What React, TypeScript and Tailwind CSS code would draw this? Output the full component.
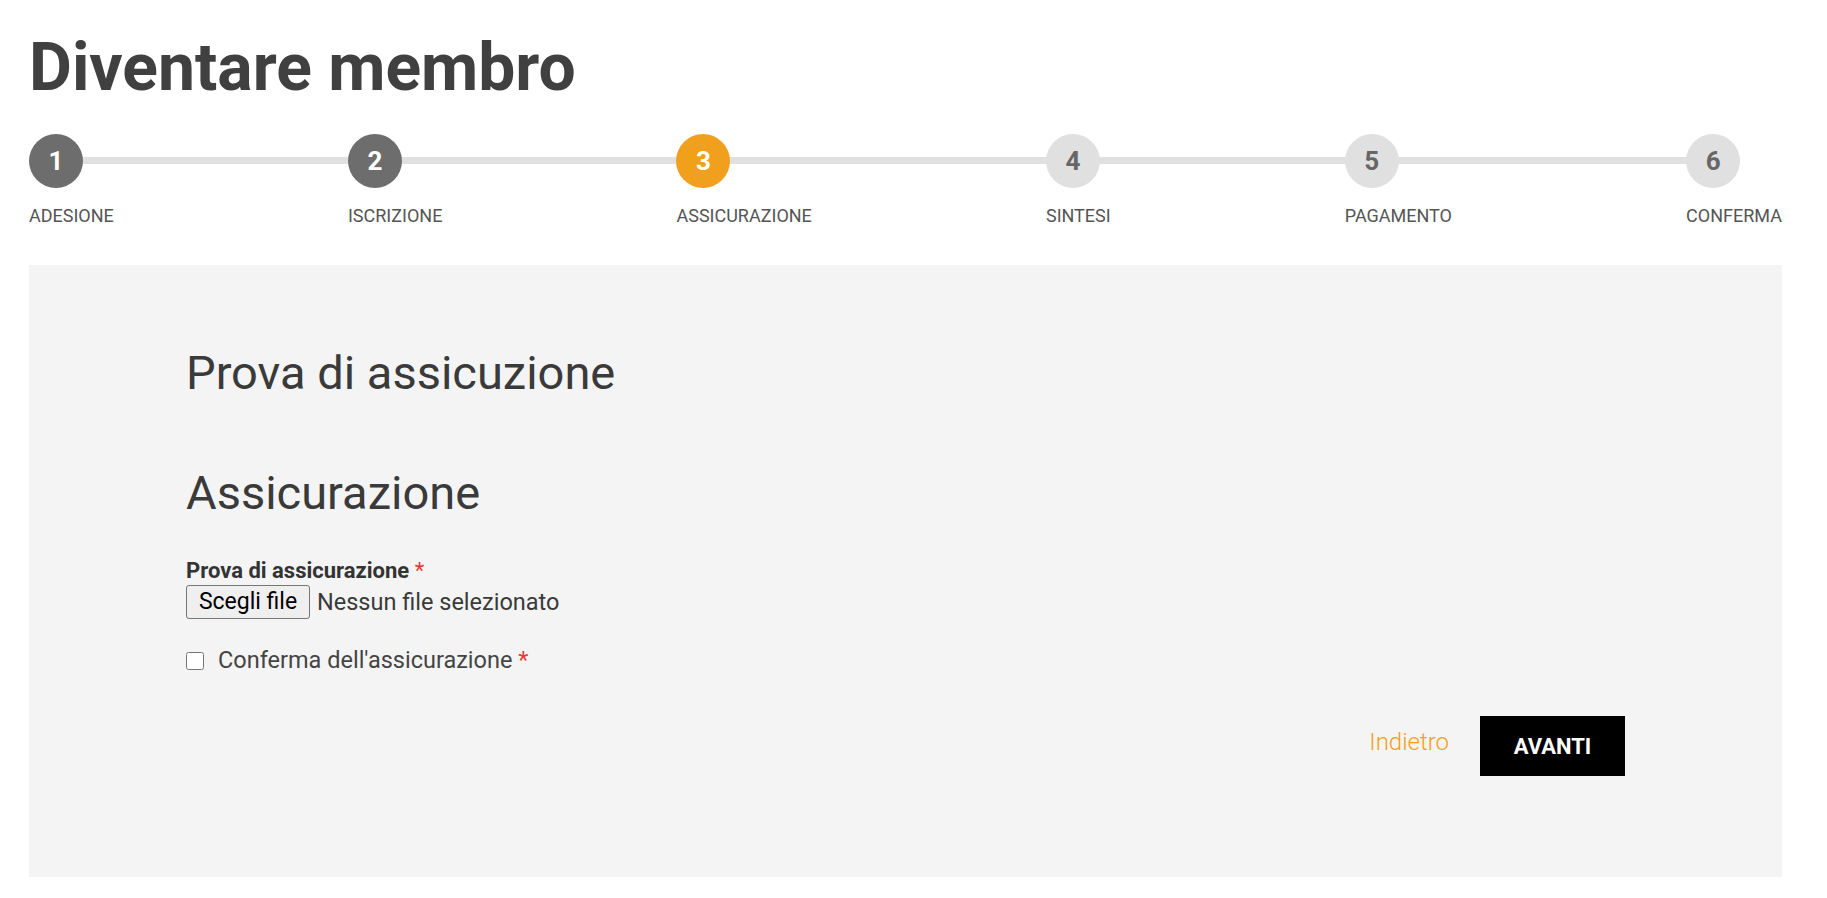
import React from "react";

const steps = [
  { n: 1, label: "ADESIONE", state: "done" },
  { n: 2, label: "ISCRIZIONE", state: "done" },
  { n: 3, label: "ASSICURAZIONE", state: "current" },
  { n: 4, label: "SINTESI", state: "todo" },
  { n: 5, label: "PAGAMENTO", state: "todo" },
  { n: 6, label: "CONFERMA", state: "todo" },
];

export default function App() {
  return (
    <div className="w-[1827px] min-h-[898px] bg-white font-['Roboto',sans-serif]">
      <div className="ml-[29px] w-[1753px] pt-[34px]">
        <h1 className="text-[66px] leading-[67px] font-bold text-[#404040]">
          Diventare membro
        </h1>

        <div className="relative mt-[33px] flex justify-between">
          <div className="absolute left-[27px] right-[60px] top-[23px] h-[7px] bg-[#e0e0e0]" />
          {steps.map((s) => (
            <div key={s.n} className="relative flex flex-col items-start">
              <div
                className={
                  s.state === "done"
                    ? "w-[54px] h-[54px] rounded-full flex items-center justify-center text-[26px] font-bold bg-[#6d6d6d] text-white"
                    : s.state === "current"
                    ? "w-[54px] h-[54px] rounded-full flex items-center justify-center text-[26px] font-bold bg-[#f0a01c] text-white"
                    : "w-[54px] h-[54px] rounded-full flex items-center justify-center text-[26px] font-bold bg-[#e0e0e0] text-[#666666]"
                }
              >
                {s.n}
              </div>
              <div className="mt-[14px] text-[18px] leading-[27px] text-[#555555]">
                {s.label}
              </div>
            </div>
          ))}
        </div>

        <div className="mt-[36px] bg-[#f4f4f4] pt-[80px] px-[157px] pb-[101px]">
          <h2 className="text-[47px] leading-[56px] font-normal text-[#3a3a3a]">
            Prova di assicuzione
          </h2>
          <h3 className="mt-[64px] text-[47px] leading-[56px] font-normal text-[#3a3a3a]">
            Assicurazione
          </h3>

          <div className="mt-[37px] text-[22px] leading-[26px] font-bold text-[#333333]">
            Prova di assicurazione <span className="text-[#e53935] font-normal">*</span>
          </div>
          <div className="mt-[1px] flex items-center">
            <button className="h-[34px] w-[124px] border border-[#767676] bg-[#efefef] rounded-[3px] text-[23px] leading-[32px] text-black font-['Roboto',sans-serif] text-center">
              Scegli file
            </button>
            <span className="ml-[7px] text-[23.5px] leading-[32px] text-[#3a3a3a]">
              Nessun file selezionato
            </span>
          </div>

          <label className="mt-[28px] flex items-center h-[27px]">
            <input
              type="checkbox"
              className="w-[18px] h-[18px] m-0 accent-[#f0a01c]"
            />
            <span className="ml-[14px] text-[23.5px] leading-[27px] text-[#444444]">
              Conferma dell'assicurazione <span className="text-[#e53935]">*</span>
            </span>
          </label>

          <div className="mt-[42px] flex justify-end items-center gap-[31px]">
            <a className="pb-[9px] text-[24px] font-light text-[#f0a01c] cursor-pointer">
              Indietro
            </a>
            <button className="w-[145px] h-[60px] bg-black text-white font-bold text-[22px]">
              AVANTI
            </button>
          </div>
        </div>
      </div>
    </div>
  );
}
